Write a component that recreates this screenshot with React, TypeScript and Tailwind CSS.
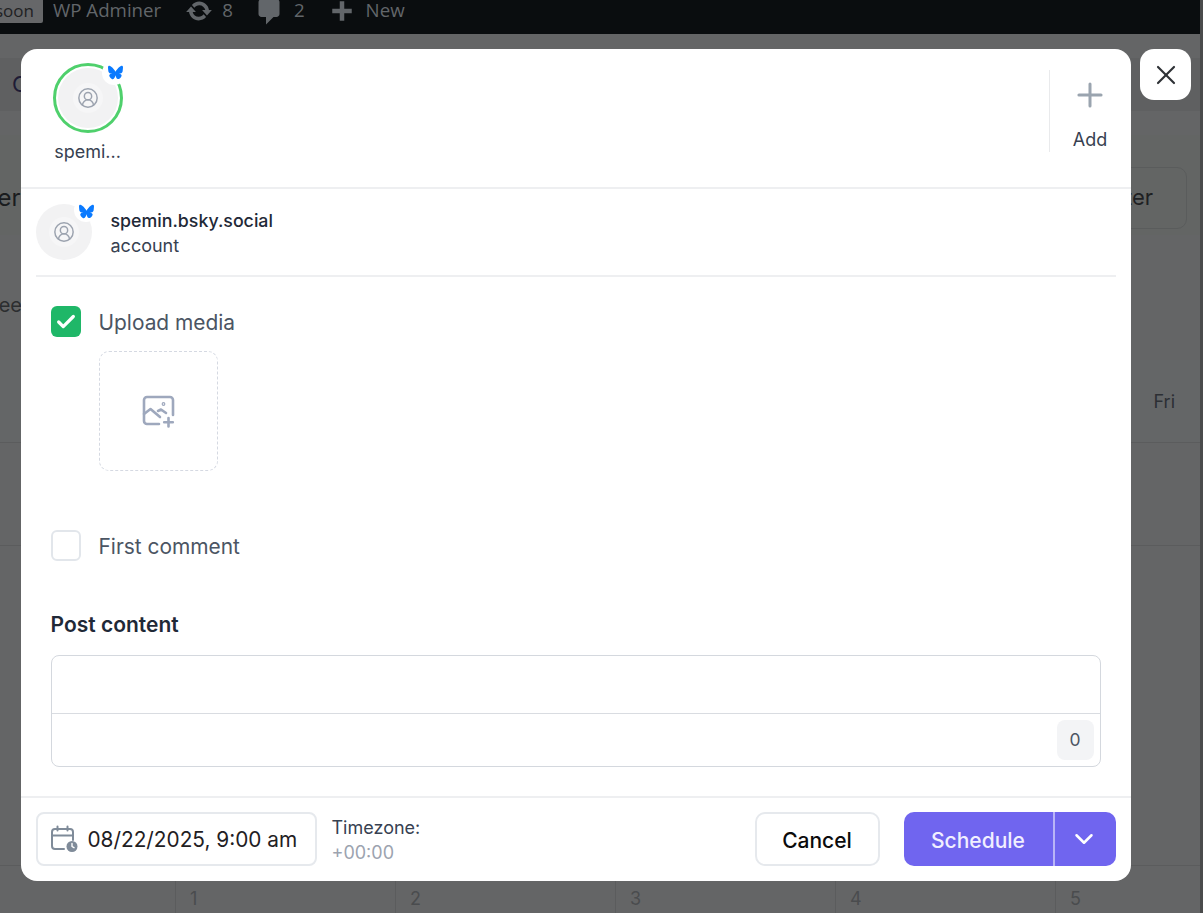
import React from 'react';
import { Check, ChevronDown, CircleUserRound, Plus, X } from 'lucide-react';
import { FaBluesky } from 'react-icons/fa6';

const columns = ['1', '2', '3', '4', '5'];

function Avatar({ size }: { size: 'lg' | 'sm' }) {
  const large = size === 'lg';
  return (
    <div className={large ? 'relative w-[70px] h-[70px] rounded-full border-[3px] border-[#4fd06c] p-[2px]' : 'relative w-[56px] h-[56px]'}>
      <div className="w-full h-full rounded-full bg-[#f2f2f3] flex items-center justify-center">
        <div className="w-[30px] h-[30px] rounded-full bg-[#f6f6f7] flex items-center justify-center">
          <CircleUserRound className="w-[22px] h-[22px] text-[#9ca3af]" strokeWidth={1.6} />
        </div>
      </div>
      <div className={large ? 'absolute -top-[5px] right-[-6px] w-[24px] h-[24px] rounded-full bg-white flex items-center justify-center' : 'absolute -top-[6px] right-[-6px] w-[24px] h-[24px] rounded-full bg-white flex items-center justify-center'}>
        <FaBluesky className={large ? 'w-[15px] h-[15px] text-[#0a7aff] ml-[4px] -mt-[2px]' : 'w-[15px] h-[15px] text-[#0a7aff] ml-[1px] mt-[3px]'} />
      </div>
    </div>
  );
}

function AdminBar() {
  return (
    <div className="h-[34px] bg-[#0a0d0f] text-[#62666a] text-[18.7px] font-['Open_Sans',sans-serif] overflow-hidden shrink-0">
      <div className="h-[21px] flex items-center">
        <div className="self-start h-[23px] w-[43px] bg-[#666769] rounded-br-[2px] text-[#1f2123] flex items-center justify-end pr-[9px] pb-[2px] text-[17px]">soon</div>
        <span className="ml-[10px]">WP Adminer</span>
        <svg viewBox="0 0 20 20" className="w-[28px] h-[28px] ml-[24px] fill-[#62666a] shrink-0">
          <path d="M10.2 3.28c3.53 0 6.43 2.61 6.92 6h2.08l-3.5 4-3.5-4h2.32c-.45-1.97-2.21-3.45-4.32-3.45-1.45 0-2.73.71-3.54 1.78L4.95 5.66C6.23 4.2 8.11 3.28 10.2 3.28zm-.4 13.44c-3.52 0-6.43-2.61-6.92-6H.8l3.5-4c1.17 1.33 2.33 2.67 3.5 4H5.48c.45 1.97 2.21 3.45 4.32 3.45 1.45 0 2.73-.71 3.54-1.78l1.71 1.95c-1.28 1.46-3.15 2.38-5.25 2.38z" />
        </svg>
        <span className="ml-[9px]">8</span>
        <svg viewBox="0 0 20 20" className="w-[30px] h-[30px] ml-[21px] fill-[#62666a] shrink-0">
          <path d="M5 2h10c1.1 0 2 .9 2 2v8c0 1.1-.9 2-2 2h-2l-5 5v-5H5c-1.1 0-2-.9-2-2V4c0-1.1.9-2 2-2z" />
        </svg>
        <span className="ml-[10px]">2</span>
        <svg viewBox="0 0 20 20" className="w-[30px] h-[30px] ml-[22px] fill-[#62666a] shrink-0">
          <path d="M17 7v3h-5v5H9v-5H4V7h5V2h3v5h5z" transform="translate(-0.5 1.5)" />
        </svg>
        <span className="ml-[9px]">New</span>
      </div>
    </div>
  );
}

// dimmed calendar page that sits behind the dialog
function Backdrop() {
  return (
    <div className="h-[913px] flex flex-col bg-[#646566] border-r-[3px] border-[#4a4b4c] text-[#26282c] font-['Inter',sans-serif] overflow-hidden">
      <AdminBar />
      <div className="h-[24px] shrink-0" />
      <div className="h-[53px] shrink-0 bg-[#5f6061] pl-[12px] flex items-center text-[22px] text-[#1e1c36]">C</div>
      <div className="h-[24px] shrink-0" />
      <div className="h-[100px] shrink-0 bg-[#636564] flex items-center justify-between pt-[25px] pr-[13px] text-[24px]">
        <span className="-ml-[10px] text-[#1a1c1e]">ter</span>
        <div className="w-[200px] h-[62px] rounded-[10px] border border-[#5a5c5c] flex items-center justify-end pr-[33px] text-[22px] text-[#1e2022]">ter</div>
      </div>
      <div className="h-[125px] shrink-0 bg-[#646566] text-[20px] flex items-center pt-[14px] text-[#2c2e30] -ml-[20px]">Week</div>
      <div className="h-[83px] shrink-0 bg-[#646667] border-b border-[#5b5c5d] flex items-center justify-end pr-[25px] pt-[1px] text-[18px] text-[#2c2f34]">Fri</div>
      <div className="h-[103px] shrink-0 border-b border-[#5b5c5d]" />
      <div className="h-[320px] shrink-0 border-b border-[#5b5c5d]" />
      <div className="flex-1 grid grid-cols-[175px_220px_220px_220px_220px_1fr] text-[18px] text-[#4a4c4e]">
        <div />
        {columns.map((day) => (
          <div key={day} className="border-l border-[#5b5c5d] pl-[14px] pt-[19px]">{day}</div>
        ))}
      </div>
    </div>
  );
}

function OptionRow({ checked, label }: { checked?: boolean; label: string }) {
  return (
    <div className="h-[31px] flex items-center gap-[18px]">
      <div className={checked ? 'w-[30px] h-[31px] rounded-[6px] bg-[#1fb768] flex items-center justify-center' : 'w-[30px] h-[31px] rounded-[6px] border-2 border-[#e2e6eb] bg-white'}>
        {checked && <Check className="w-[22px] h-[22px] text-white" strokeWidth={3.5} />}
      </div>
      <span className="text-[20.9px] leading-[30px] pt-[2px] text-[#4b5563]">{label}</span>
    </div>
  );
}

function MediaPlusIcon() {
  return (
    <svg viewBox="0 0 34 34" className="w-[34px] h-[34px] fill-none stroke-[#9ea8bd]" strokeWidth="2.6" strokeLinecap="round" strokeLinejoin="round">
      <path d="M18 30H6a3 3 0 0 1-3-3V6a3 3 0 0 1 3-3h23a3 3 0 0 1 3 3v15" />
      <path d="M3 20l6.5-5 9.5 8M17 17l3-1.5 5 3.5" />
      <path d="M27.5 24v8.5M23.2 28.2h8.6" />
      <circle cx="22.5" cy="10" r="0.6" />
    </svg>
  );
}

function CalendarClockIcon() {
  return (
    <svg viewBox="0 0 28 28" className="w-[28px] h-[28px] fill-none stroke-[#7f8b99]" strokeWidth="2" strokeLinecap="round" strokeLinejoin="round">
      <path d="M14 24H5a3 3 0 0 1-3-3V7a3 3 0 0 1 3-3h15a3 3 0 0 1 3 3v8" />
      <path d="M2 10.5h21M7.5 1.5v4M17.5 1.5v4" />
      <circle cx="22" cy="21.5" r="5.5" className="fill-[#7f8b99]" stroke="none" />
      <path d="M22 18.5v3l2 1.2" className="stroke-white" strokeWidth="1.4" />
    </svg>
  );
}

function Dialog() {
  return (
    <div className="absolute left-[20.5px] top-[49px] w-[1110px] h-[832px] bg-white rounded-[16px] flex flex-col font-['Inter',sans-serif]">
      <div className="h-[140px] shrink-0 border-b-2 border-[#eeeff1] flex justify-between pl-[32px] pt-[14px]">
        <div className="flex flex-col items-center w-[70px]">
          <Avatar size="lg" />
          <span className="mt-[7px] text-[18px] leading-[24px] text-[#374151]">spemi...</span>
        </div>
        <div className="h-[82px] mt-[7px] border-l border-[#e9eaec] w-[82px] flex flex-col items-center">
          <Plus className="w-[38px] h-[38px] mt-[6px] shrink-0 text-[#9aa4af]" strokeWidth={1.9} />
          <span className="mt-[14px] text-[18px] leading-[24px] text-[#374151]">Add</span>
        </div>
      </div>

      <div className="mx-[15px] h-[88px] shrink-0 border-b-2 border-[#eeeff1] flex items-center gap-[19px]">
        <Avatar size="sm" />
        <div className="flex flex-col pt-[2px]">
          <span className="text-[17.8px] leading-[25px] font-medium text-[#1f2937]">spemin.bsky.social</span>
          <span className="text-[18px] leading-[25px] text-[#374151]">account</span>
        </div>
      </div>

      <div className="flex-1 px-[30px] pt-[29px] flex flex-col">
        <OptionRow checked label="Upload media" />
        <div className="ml-[48px] mt-[14px] w-[119px] h-[120px] rounded-[10px] border border-dashed border-[#d5d9e2] flex items-center justify-center">
          <MediaPlusIcon />
        </div>
        <div className="mt-[59px]">
          <OptionRow label="First comment" />
        </div>
        <h3 className="mt-[49px] text-[21px] leading-[30px] font-semibold text-[#1f2937]">Post content</h3>
        <div className="mt-[15px] h-[112px] rounded-[8px] border border-[#d4d8de] flex flex-col">
          <div className="h-[58px] border-b border-[#d9dce1]" />
          <div className="flex-1 flex justify-end pr-[6px] pt-[6px]">
            <div className="w-[37px] h-[40px] rounded-[8px] bg-[#f3f4f6] flex items-center justify-center text-[17.5px] text-[#4b5563]">0</div>
          </div>
        </div>
      </div>

      <div className="h-[85px] shrink-0 border-t-2 border-[#eeeff1] flex items-center px-[15px] pb-[1px]">
        <div className="w-[281px] h-[54px] rounded-[8px] border-2 border-[#e6e9ed] flex items-center pl-[12px] gap-[10px]">
          <CalendarClockIcon />
          <span className="text-[20.8px] pt-[2px] text-[#1f2023]">08/22/2025, 9:00 am</span>
        </div>
        <div className="ml-[15px] pt-[1px] flex flex-col">
          <span className="text-[18px] leading-[25px] text-[#374151]">Timezone:</span>
          <span className="text-[18px] leading-[25px] text-[#9ca3af]">+00:00</span>
        </div>
        <button className="ml-auto w-[125px] h-[54px] pt-[3px] rounded-[10px] border-2 border-[#e6e9ed] bg-white text-[21px] font-medium text-[#0b0b0c]">Cancel</button>
        <div className="ml-[24px] w-[212px] h-[54px] rounded-[10px] bg-[#7065ef] flex items-center text-white">
          <span className="w-[149px] pt-[3px] text-center text-[21px] font-medium text-[#f1efff]">Schedule</span>
          <div className="flex-1 h-full border-l-2 border-[#b9b4f7] flex items-center justify-center pr-[2px]">
            <ChevronDown className="w-[30px] h-[30px]" strokeWidth={2} />
          </div>
        </div>
      </div>
    </div>
  );
}

export default function App() {
  return (
    <div className="relative h-[913px] overflow-hidden">
      <Backdrop />
      <Dialog />
      <button className="absolute left-[1140px] top-[49px] w-[51px] h-[51px] rounded-[14px] bg-white flex items-center justify-center">
        <X className="w-[32px] h-[32px] text-[#2f3236]" strokeWidth={1.6} />
      </button>
    </div>
  );
}
